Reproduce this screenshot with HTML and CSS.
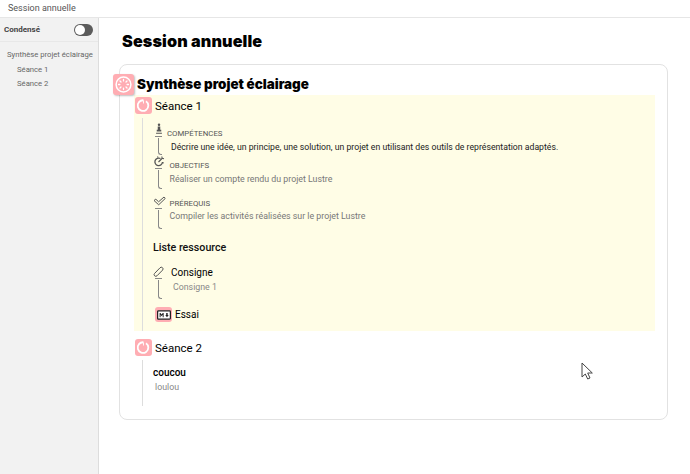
FILE: index.html
```html
<!DOCTYPE html>
<html lang="fr">
<head>
<meta charset="utf-8">
<title>Session annuelle</title>
<link rel="stylesheet" href="styles.css">
</head>
<body>
<header class="top">Session annuelle</header>
<div class="shell">
  <aside class="side">
    <div class="cond"><b>Condensé</b><span class="toggle"><i></i></span></div>
    <nav class="nav">
      <a>Synthèse projet éclairage</a>
      <a class="sub">Séance 1</a>
      <a class="sub">Séance 2</a>
    </nav>
  </aside>
  <main class="main">
    <h1>Session annuelle</h1>
    <section class="card">
      <div class="head">
        <span class="badge big">
          <svg viewBox="0 0 21 21" width="21" height="21"><circle cx="10.5" cy="10.5" r="7.4" fill="none" stroke="#fff" stroke-width="1.5"/><g stroke="#fff" stroke-width="1.3" stroke-linecap="round"><path d="M10.5 5.500v1.400M10.500 14.100v1.400M5.500 10.500h1.400M14.100 10.500h1.400M7 7l1 1M13 13l1 1M14 7l-1 1M8 13l-1 1"/></g></svg>
        </span>
        <h2>Synthèse projet éclairage</h2>
      </div>
      <article class="seance yellow">
        <div class="shead">
          <span class="badge">
            <svg viewBox="0 0 17 17" width="17" height="17"><path d="M11 4.200a5.300 5.300 0 1 1-2.500-.9" fill="none" stroke="#fff" stroke-width="1.800"/><path d="M8.500 3.500v3" stroke="#fff" stroke-width=".9"/></svg>
          </span>
          <h3>Séance 1</h3>
        </div>
        <div class="body">
          <div class="item comp">
            <div class="rail">
              <svg class="ico" viewBox="0 0 12 14" width="10" height="12"><path d="M6 .3a1.500 1.500 0 1 1 0 3 1.500 1.500 0 0 1 0-3zM4.500 4h3v4h1.200v2H3.300V8h1.200zM2.500 11.500h7v1.300h-7z" fill="#555"/></svg>
              <span class="hook tall"></span>
            </div>
            <div class="txt">
              <div class="label">COMPÉTENCES</div>
              <p class="dark">Décrire une idée, un principe, une solution, un projet en utilisant des outils de représentation adaptés.</p>
            </div>
          </div>
          <div class="item obj">
            <div class="rail">
              <svg class="ico" viewBox="0 0 12 11" width="12" height="11"><path d="M7.500 2.500A3.800 3.800 0 1 0 9.500 6" fill="none" stroke="#555" stroke-width="1.300"/><path d="M5.500 6l4-4M8.800.5l.4 1.800 1.800.4M4.500.6l.5 1M10.800 7l-1-.3" fill="none" stroke="#555" stroke-width="1.100"/></svg>
              <span class="hook"></span>
            </div>
            <div class="txt">
              <div class="label">OBJECTIFS</div>
              <p>Réaliser un compte rendu du projet Lustre</p>
            </div>
          </div>
          <div class="item pre">
            <div class="rail">
              <svg class="ico" viewBox="0 0 13 11" width="13" height="11"><path d="M1 4.500l1.800-1.300 2.800 2.600L11 1l1.200 1.500-6.500 6.300z" fill="none" stroke="#555" stroke-width="1"/></svg>
              <span class="hook"></span>
            </div>
            <div class="txt">
              <div class="label">PRÉREQUIS</div>
              <p>Compiler les activités réalisées sur le projet Lustre</p>
            </div>
          </div>
          <h4 class="list">Liste ressource</h4>
          <div class="res">
            <div class="rail">
              <svg class="ico" viewBox="0 0 12 11" width="12" height="11"><path d="M1.500 7.500L7 1.800a1.700 1.700 0 0 1 2.600 2.300L4 9.800a1.700 1.700 0 0 1-2.500-2.300z" fill="none" stroke="#555" stroke-width="1"/></svg>
              <span class="hook short"></span>
            </div>
            <div class="txt">
              <div class="rname">Consigne</div>
              <p class="rsub">Consigne 1</p>
            </div>
          </div>
          <div class="essai">
            <span class="badge md">
              <svg viewBox="0 0 16 11" width="14" height="10"><rect x=".7" y=".7" width="14.600" height="9.600" rx="1" fill="#fff" stroke="#222" stroke-width="1.400"/><path d="M3 8V3.200h1l1.300 1.800 1.300-1.800h1V8H6.500V5.300L5.300 7 4.100 5.300V8zM10.500 3.200h1.700v2.400h1.200l-2 2.400-2-2.400h1.100z" fill="#222"/></svg>
            </span>
            <span class="rname">Essai</span>
          </div>
        </div>
      </article>
      <article class="seance second">
        <div class="shead">
          <span class="badge">
            <svg viewBox="0 0 17 17" width="17" height="17"><path d="M11 4.200a5.300 5.300 0 1 1-2.500-.9" fill="none" stroke="#fff" stroke-width="1.800"/><path d="M8.500 3.500v3" stroke="#fff" stroke-width=".9"/></svg>
          </span>
          <h3>Séance 2</h3>
        </div>
        <div class="body plain">
          <div class="rname">coucou</div>
          <p class="lou">loulou</p>
        </div>
      </article>
    </section>
  </main>
</div>
<svg class="cursor" viewBox="0 0 14 18" width="14" height="18"><path d="M1 1v14l3.300-3 2.400 5 2.300-1-2.300-5h4.600z" fill="#fff" stroke="#444" stroke-width="1"/></svg>
</body>
</html>
```
FILE: styles.css
```css
* { box-sizing: border-box; }
html, body { margin: 0; height: 100%; }
body { font-family: Roboto, "Liberation Sans", sans-serif; background: #fff; color: #000; position: relative; overflow: hidden; width: 690px; height: 474px; }
.top { height: 18px; border-bottom: 1px solid #e6e6e6; padding-left: 8px; font-size: 9px; line-height: 17px; color: #555; }
.shell { display: flex; height: 456px; }
.side { width: 99px; flex: none; background: #f2f2f2; border-right: 1px solid #ddd; }
.cond { height: 24px; display: flex; align-items: center; justify-content: space-between; padding: 0 5px 0 4px; border-bottom: 1px solid #e8e8e8; font-size: 8px; color: #444; }
.toggle { width: 19px; height: 12px; border-radius: 6px; background: #5c5c5c; display: flex; align-items: center; padding-left: 1px; }
.toggle i { width: 10px; height: 10px; border-radius: 50%; background: #fff; }
.nav { display: flex; flex-direction: column; padding: 6px 0 0 7px; font-size: 7.700px; color: #666; line-height: 14.500px; white-space: nowrap; }
.sub { padding-left: 10px; }
.main { flex: 1; padding-left: 20px; min-width: 0; }
h1 { margin: 0; height: 46px; padding: 13px 0 0 3px; font-family: Inter, Roboto, sans-serif; font-weight: 900; font-size: 16.200px; line-height: 20px; letter-spacing: .1px; }
.card { width: 549px; height: 356px; border: 1px solid #e2e2e2; border-radius: 8px; padding-top: 8px; }
.head { display: flex; align-items: center; margin-left: -7px; height: 22px; }
.badge { display: flex; align-items: center; justify-content: center; flex: none; width: 17px; height: 17px; background: #ffadb3; border-radius: 3px; }
.badge.big { width: 21px; height: 21px; box-shadow: 1px 1px 2px rgba(0,0,0,.25); }
.badge.md { width: 17px; height: 15px; }
h2 { margin: 0 0 0 3px; font-family: Inter, Roboto, sans-serif; font-weight: 900; font-size: 13.400px; }
.seance { margin: 0 12px 0 14px; }
.yellow { background: #fffde6; height: 236px; }
.shead { display: flex; align-items: center; height: 23px; padding: 2px 0 4px 1px; }
h3 { margin: 0 0 0 3px; font-weight: 400; font-size: 11.500px; }
.body { margin-left: 8px; border-left: 1px solid #ddd; padding-left: 10px; height: 213px; }
.item { display: flex; }
.rail { width: 12px; flex: none; display: flex; flex-direction: column; align-items: center; }
.hook { width: 4px; height: 19px; margin-top: 3px; border-left: 1px solid #888; border-bottom: 1px solid #888; border-radius: 0 0 0 3px; margin-left: 1px; }
.hook::before { content: ""; display: block; width: 7px; height: 1px; margin: -2px 0 0 -4px; background: #888; }
.hook.tall { height: 17px; }
.hook.short { height: 19px; }
.ico { display: block; }
.comp { height: 38px; padding-top: 5px; }
.obj { height: 40px; }
.pre { height: 34px; }
.txt { padding-left: 2px; }
.obj .txt, .pre .txt { padding-left: 4.500px; }
.label { font-size: 7.800px; line-height: 12px; color: #555; }
.comp .label { margin-top: 5px; }
.obj .label { margin-top: 4px; }
.pre .label { margin-top: 2px; }
p { margin: 0; font-size: 8.800px; }
.item p { color: #777; line-height: 14px; margin-top: -1px; }
.obj p { margin-top: 0; }
.item .dark { color: #222; padding-left: 4px; margin-top: 0; font-size: 8.700px; }
.list { margin: 11px 0 0; font-weight: 500; font-size: 10.700px; line-height: 14px; color: #111; }
.res { display: flex; margin-top: 11px; }
.res .txt { padding-left: 6px; }
.rname { font-size: 10px; line-height: 14px; color: #000; }
.rsub { font-size: 8.800px; color: #888; padding-left: 2px; margin-top: 0; line-height: 14px; }
.essai { display: flex; align-items: center; gap: 3px; margin: 8px 0 0 2px; }
.second { margin-top: 6px; }
.plain { height: 46px; padding-top: 6px; }
.plain .rname { font-weight: 500; }
.lou { color: #888; padding-left: 2px; line-height: 14px; }
.cursor { position: absolute; left: 581px; top: 362px; }
```
